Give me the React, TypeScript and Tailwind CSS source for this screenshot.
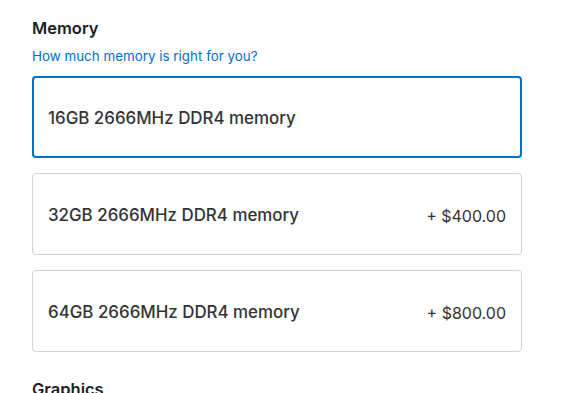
import React from 'react';

interface MemoryOption {
    id: string;
    label: string;
    price?: string;
}

const options: MemoryOption[] = [
    { id: '16', label: '16GB 2666MHz DDR4 memory' },
    { id: '32', label: '32GB 2666MHz DDR4 memory', price: '+ $400.00' },
    { id: '64', label: '64GB 2666MHz DDR4 memory', price: '+ $800.00' },
];

export default function App() {
    const selected = '16';

    return (
        <div className="min-h-[393px] w-[572px] overflow-hidden bg-white font-['Inter',sans-serif] text-[#333336]">
            <div className="pl-8 pr-[50px] pt-[17px]">
                <h2 className="text-[16.5px] font-semibold leading-[22px] text-[#1d1d1f]">Memory</h2>
                <a href="#" className="mt-[8px] block text-[13.4px] leading-[18px] text-[#0070c9]">
                    How much memory is right for you?
                </a>

                <div className="mt-[11px] flex flex-col gap-[15px]">
                    {options.map((opt) => (
                        <div
                            key={opt.id}
                            className={`flex h-[82px] items-center justify-between rounded-[4px] pt-[4px] ${
                                opt.id === selected
                                    ? 'border-2 border-[#0070c9] px-[14px]'
                                    : 'border border-[#d2d2d7] px-[15px]'
                            }`}
                        >
                            <span className="text-[16.9px] font-medium">{opt.label}</span>
                            {opt.price && <span className="text-[16px]">{opt.price}</span>}
                        </div>
                    ))}
                </div>

                <h2 className="mt-[26px] text-[16.5px] font-semibold leading-[22px] text-[#1d1d1f]">Graphics</h2>
            </div>
        </div>
    );
}
